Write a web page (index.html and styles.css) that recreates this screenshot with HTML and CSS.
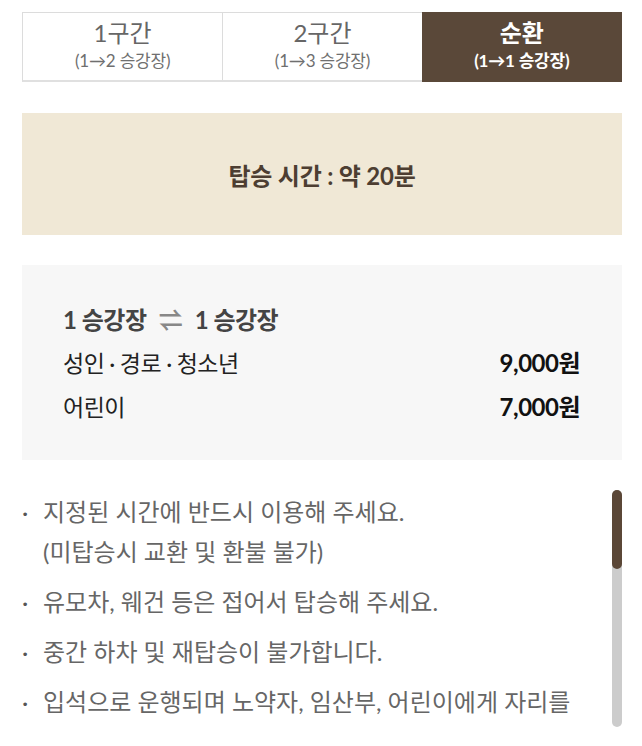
FILE: index.html
```html
<!DOCTYPE html>
<html lang="ko">
<head>
<meta charset="utf-8">
<title>요금 안내</title>
<link rel="stylesheet" href="styles.css">
</head>
<body>
<div class="page">
  <div class="tabs">
    <div class="tab">
      <span class="tab-title">1구간</span>
      <span class="tab-sub">(1→2 승강장)</span>
    </div>
    <div class="tab">
      <span class="tab-title">2구간</span>
      <span class="tab-sub">(1→3 승강장)</span>
    </div>
    <div class="tab active">
      <span class="tab-title">순환</span>
      <span class="tab-sub">(1→1 승강장)</span>
    </div>
  </div>

  <div class="time-box">탑승 시간 : 약 20분</div>

  <div class="fare-box">
    <div class="route">1 승강장 <span class="route-arrow">⇌</span> 1 승강장</div>
    <div class="fare-row"><span>성인<span class="dot">·</span>경로<span class="dot">·</span>청소년</span><span class="price">9,000원</span></div>
    <div class="fare-row"><span>어린이</span><span class="price">7,000원</span></div>
  </div>

  <div class="notice">
    <ul class="notice-list">
      <li>지정된 시간에 반드시 이용해 주세요.<br>(미탑승시 교환 및 환불 불가)</li>
      <li>유모차, 웨건 등은 접어서 탑승해 주세요.</li>
      <li>중간 하차 및 재탑승이 불가합니다.</li>
      <li>입석으로 운행되며 노약자, 임산부, 어린이에게 자리를 양보해 주세요.</li>
      <li>기상 악화 시 운행이 중단될 수 있습니다.</li>
      <li>반려동물은 전용 케이지에 넣어 탑승해 주세요.</li>
      <li>차내에서는 음식물 섭취를 삼가 주세요.</li>
      <li>안전을 위해 안내원의 안내에 따라 주세요.</li>
      <li>승차권은 하차 시까지 소지해 주세요.</li>
      <li>운행 시간은 현지 사정에 따라 변경될 수 있습니다.</li>
      <li>분실물은 매표소로 문의해 주세요.</li>
    </ul>
    <div class="scrollbar"><div class="scrollbar-thumb"></div></div>
  </div>
</div>
</body>
</html>
```

FILE: styles.css
```css
html, body {
  margin: 0;
  padding: 0;
  background: #fff;
}

body {
  font-family: Lato, "Noto Sans CJK KR", "Noto Sans", sans-serif;
  height: 746px;
  overflow: hidden;
}

.page {
  width: 600px;
  padding: 12px 20px 0 22px;
}

.tabs {
  display: grid;
  grid-template-columns: 1fr 1fr 1fr;
  height: 70px;
  box-sizing: border-box;
  border: 1px solid #dcdcdc;
  border-bottom-width: 2px;
  border-bottom-color: #e0e0e0;
}

.tab {
  display: flex;
  flex-direction: column;
  align-items: center;
  justify-content: flex-start;
  padding-top: 7px;
  color: #666;
}

.tab + .tab {
  border-left: 1px solid #dcdcdc;
}

.tab-title {
  font-size: 24px;
  line-height: 26px;
}

.tab-sub {
  margin-top: 5px;
  font-size: 17px;
  line-height: 20px;
  letter-spacing: -0.2px;
  color: #6f6f6f;
}

.tab.active {
  background: #5a4839;
  color: #fff;
  border-left: none;
  margin: -1px -1px -2px 0;
  padding-top: 8px;
}

.tab.active .tab-title,
.tab.active .tab-sub {
  font-weight: 700;
  color: #fff;
}

.time-box {
  margin-top: 31px;
  height: 122px;
  display: flex;
  align-items: center;
  justify-content: center;
  background: #f0e8d6;
  color: #4d3e32;
  font-size: 24px;
  font-weight: 700;
  letter-spacing: -0.2px;
}

.fare-box {
  margin-top: 30px;
  background: #f7f7f7;
  padding: 34px 42px 31px 41px;
  letter-spacing: -0.5px;
}

.route {
  font-size: 24px;
  line-height: 42px;
  font-weight: 700;
  color: #444;
}

.route-arrow {
  color: #888;
  font-weight: 700;
  margin: 0 7px;
}

.fare-row {
  display: flex;
  justify-content: space-between;
  font-size: 23px;
  line-height: 44px;
  color: #222;
}

.dot {
  margin: 0 5px;
}

.price {
  font-size: 24px;
  font-weight: 700;
  color: #111;
}

.notice {
  margin-top: 30px;
  height: 237px;
  display: flex;
}

.notice-list {
  flex: 1;
  overflow: hidden;
  list-style: none;
  margin: 0;
  padding: 2px 12px 0 0;
  word-break: keep-all;
}

.notice-list li {
  font-size: 24px;
  line-height: 40px;
  color: #666;
  margin-bottom: 10px;
  padding-left: 21px;
  text-indent: -21px;
}

.notice-list li::before {
  content: "·";
  display: inline-block;
  width: 21px;
  text-indent: 0;
  color: #555;
}

.scrollbar {
  width: 10px;
  height: 237px;
  background: #cccccc;
  border-radius: 5px;
}

.scrollbar-thumb {
  height: 79px;
  background: #5b4737;
  border-radius: 5px;
}
```
